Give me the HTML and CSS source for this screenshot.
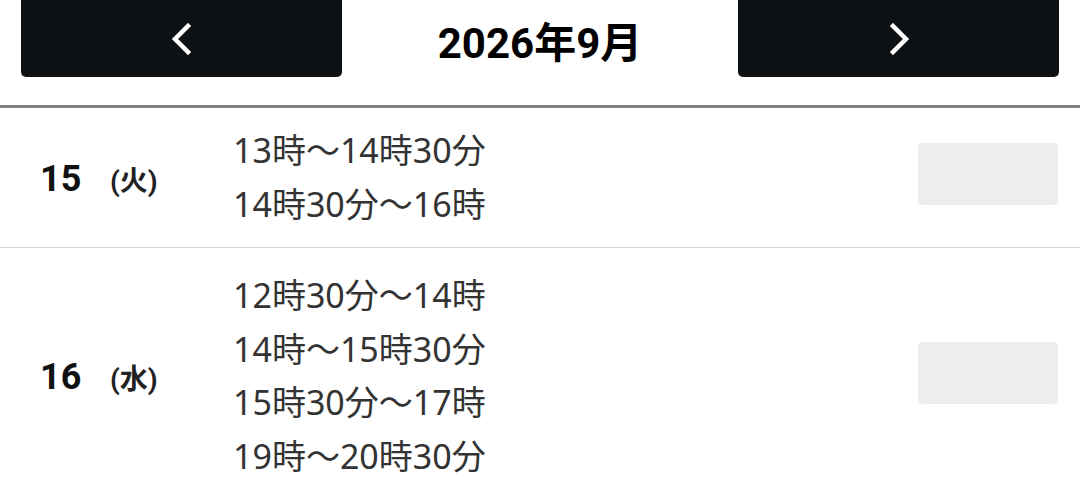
FILE: index.html
```html
<!DOCTYPE html>
<html lang="ja">
<head>
<meta charset="utf-8">
<title>予約カレンダー</title>
<link rel="stylesheet" href="styles.css">
</head>
<body>
<div class="page">
  <header class="month-nav">
    <button class="nav-btn" type="button" aria-label="前の月">
      <svg class="chev" viewBox="0 0 22 32" width="22" height="32"><path d="M17 3 L4 16 L17 29" fill="none" stroke="#fff" stroke-width="4.5" stroke-linecap="square"/></svg>
    </button>
    <h1 class="month-title">2026年9月</h1>
    <button class="nav-btn" type="button" aria-label="次の月">
      <svg class="chev" viewBox="0 0 22 32" width="22" height="32"><path d="M5 3 L18 16 L5 29" fill="none" stroke="#fff" stroke-width="4.5" stroke-linecap="square"/></svg>
    </button>
  </header>
  <ul class="days">
    <li class="day">
      <div class="day-date"><span class="day-num">15</span><span class="day-wd">(火)</span></div>
      <div class="day-times">
        <div class="slot">13時～14時30分</div>
        <div class="slot">14時30分～16時</div>
      </div>
      <div class="day-action"></div>
    </li>
    <li class="day day--many">
      <div class="day-date"><span class="day-num">16</span><span class="day-wd">(水)</span></div>
      <div class="day-times">
        <div class="slot">12時30分～14時</div>
        <div class="slot">14時～15時30分</div>
        <div class="slot">15時30分～17時</div>
        <div class="slot">19時～20時30分</div>
      </div>
      <div class="day-action"></div>
    </li>
  </ul>
</div>
</body>
</html>
```

FILE: styles.css
```css
* { box-sizing: border-box; }
html, body { margin: 0; padding: 0; background: #fff; }
body {
  font-family: Roboto, "Noto Sans CJK JP", sans-serif;
  color: #111;
}
.page { width: 1080px; }

.month-nav {
  display: flex;
  align-items: flex-start;
  padding: 0 21px 28px;
  border-bottom: 3px solid #808080;
}
.nav-btn {
  width: 321px;
  height: 77px;
  border: 0;
  border-radius: 0 0 5px 5px;
  background: #0e1114;
  display: flex;
  align-items: center;
  justify-content: center;
  padding: 0;
  cursor: pointer;
}
.chev { display: block; }
.month-title {
  flex: 1;
  margin: 0;
  height: 77px;
  display: flex;
  align-items: center;
  justify-content: center;
  padding-top: 1px;
  font-size: 42px;
  font-weight: 700;
  color: #000;
}

.days { list-style: none; margin: 0; padding: 0; }
.day {
  display: flex;
  align-items: center;
  padding: 16px 22px 16px 40px;
  border-bottom: 1px solid #d6d6d6;
}
.day--many { padding-top: 21px; }
.day-date {
  width: 193px;
  display: flex;
  align-items: center;
  padding-top: 2px;
}
.day-num {
  width: 70px;
  font-size: 36px;
  font-weight: 700;
  color: #111;
}
.day-wd {
  font-size: 28px;
  font-weight: 700;
  color: #222;
}
.day-times { flex: 1; }
.slot {
  font-family: "Noto Sans", "Noto Sans CJK JP", sans-serif;
  font-size: 34px;
  line-height: 53.5px;
  color: #333;
}
.day-action {
  width: 140px;
  height: 62px;
  margin-bottom: 7px;
  border-radius: 4px;
  background: #ededed;
}
```
